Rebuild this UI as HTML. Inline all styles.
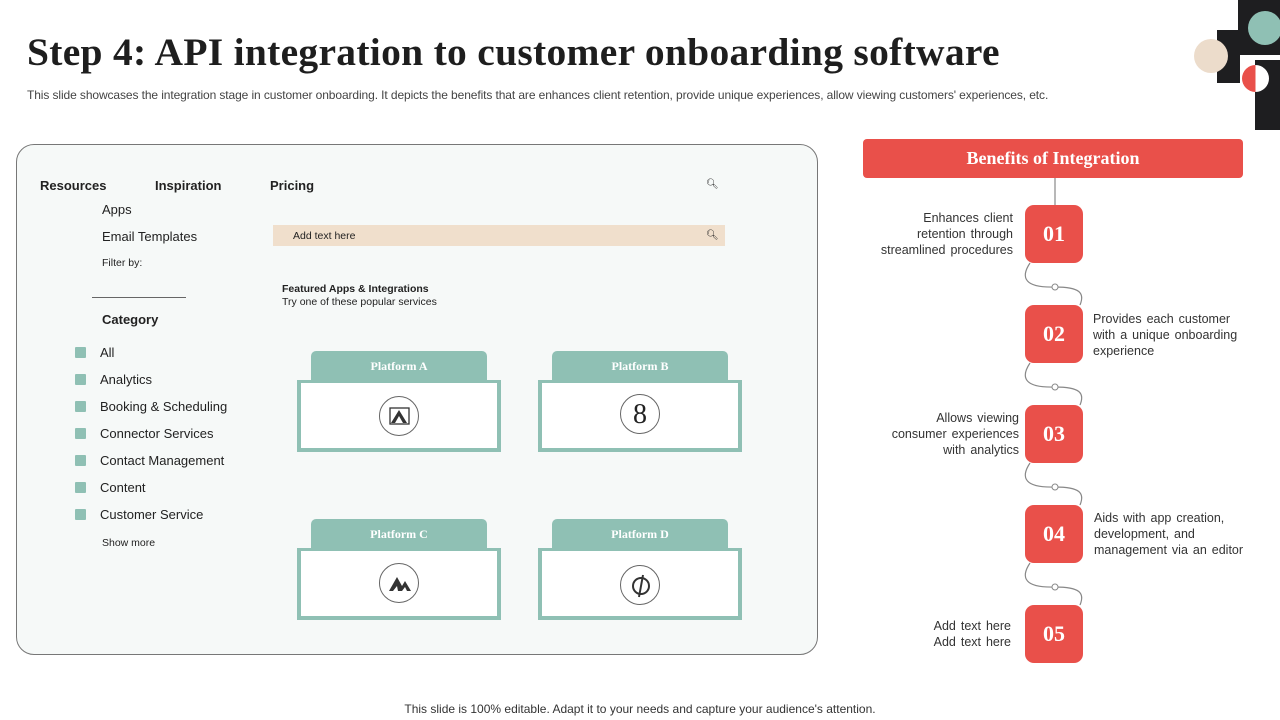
<!DOCTYPE html>
<html><head><meta charset="utf-8"><style>
*{margin:0;padding:0;box-sizing:border-box}
body{width:1280px;height:720px;position:relative;background:#fff;font-family:"Liberation Sans",sans-serif;color:#222;overflow:hidden}
.a{position:absolute}
h1{position:absolute;left:27px;top:29px;font-family:"Liberation Serif",serif;font-size:39.5px;font-weight:bold;color:#1e1e1e;white-space:nowrap;letter-spacing:0.3px}
.sub{left:27px;top:88px;font-size:12px;color:#444;letter-spacing:-0.1px}
.panel{left:16px;top:144px;width:802px;height:511px;border:1px solid #777;border-radius:18px;background:#f6f9f8}
.t13{font-size:13px;color:#222}
.chk{width:11px;height:11px;background:#8fc0b4;border-radius:1px}
.tab{width:176px;height:30px;background:#8fc0b4;border-radius:5px 5px 0 0;color:#fff;font-family:"Liberation Serif",serif;font-weight:bold;font-size:12px;text-align:center;line-height:31px}
.box{width:204px;height:72px;border:4px solid #8fc0b4;border-top:3px solid #8fc0b4;background:#fff}
.ic{width:40px;height:40px;border:1px solid #666;border-radius:50%;background:#fff}
.num{width:58px;height:58px;background:#e9504a;border-radius:9px;color:#fff;font-family:"Liberation Serif",serif;font-size:22px;font-weight:bold;text-align:center;line-height:58px}
.bt{font-size:12.5px;color:#333;line-height:16px;word-spacing:1.5px}
</style></head><body>
<h1>Step 4: API integration to customer onboarding software</h1>
<div class="a sub">This slide showcases the integration stage in customer onboarding. It depicts the benefits that are enhances client retention, provide unique experiences, allow viewing customers' experiences, etc.</div>
<div class="a" style="left:1238px;top:0;width:42px;height:55px;background:#1e1e20"></div>
<div class="a" style="left:1217px;top:30px;width:23px;height:53px;background:#1e1e20"></div>
<div class="a" style="left:1255px;top:60px;width:25px;height:70px;background:#1e1e20"></div>
<div class="a" style="left:1248px;top:11px;width:34px;height:34px;border-radius:50%;background:#8fc0b4"></div>
<div class="a" style="left:1194px;top:39px;width:34px;height:34px;border-radius:50%;background:#ecdccb"></div>
<div class="a" style="left:1242px;top:65px;width:27px;height:27px;border-radius:50%;background:linear-gradient(90deg,#e9504a 50%,#fff 50%)"></div>

<div class="a panel"></div>
<div class="a t13" style="left:40px;top:178px;font-weight:bold;font-size:13px">Resources</div>
<div class="a t13" style="left:155px;top:178px;font-weight:bold">Inspiration</div>
<div class="a t13" style="left:270px;top:178px;font-weight:bold">Pricing</div>
<div class="a" style="left:706px;top:179px;font-size:10px">🔍︎</div>
<div class="a t13" style="left:102px;top:202px">Apps</div>
<div class="a t13" style="left:102px;top:229px">Email Templates</div>
<div class="a" style="left:102px;top:257px;font-size:10.5px">Filter by:</div>
<div class="a" style="left:92px;top:297px;width:94px;height:1px;background:#666"></div>
<div class="a t13" style="left:102px;top:312px;font-weight:bold">Category</div>
<div class="a chk" style="left:75px;top:347px"></div><div class="a t13" style="left:100px;top:345px">All</div>
<div class="a chk" style="left:75px;top:374px"></div><div class="a t13" style="left:100px;top:372px">Analytics</div>
<div class="a chk" style="left:75px;top:401px"></div><div class="a t13" style="left:100px;top:399px">Booking &amp; Scheduling</div>
<div class="a chk" style="left:75px;top:428px"></div><div class="a t13" style="left:100px;top:426px">Connector Services</div>
<div class="a chk" style="left:75px;top:455px"></div><div class="a t13" style="left:100px;top:453px">Contact Management</div>
<div class="a chk" style="left:75px;top:482px"></div><div class="a t13" style="left:100px;top:480px">Content</div>
<div class="a chk" style="left:75px;top:509px"></div><div class="a t13" style="left:100px;top:507px">Customer Service</div>
<div class="a" style="left:102px;top:537px;font-size:10.5px">Show more</div>
<div class="a" style="left:273px;top:225px;width:452px;height:21px;background:#f0dfcc"></div>
<div class="a" style="left:293px;top:230px;font-size:10.5px">Add text here</div>
<div class="a" style="left:706px;top:230px;font-size:10px">🔍︎</div>
<div class="a" style="left:282px;top:283px;font-size:10.5px;font-weight:bold">Featured Apps &amp; Integrations</div>
<div class="a" style="left:282px;top:296px;font-size:10.5px">Try one of these popular services</div>

<div class="a tab" style="left:311px;top:351px">Platform A</div>
<div class="a box" style="left:297px;top:380px"></div>
<div class="a ic" style="left:379px;top:396px"><svg width="40" height="40"><rect x="10" y="11" width="19" height="16" fill="none" stroke="#333" stroke-width="1.3"/><path d="M11 26 L19 13 L27 26 L23 26 L19 19 L15 26Z" fill="#333"/></svg></div>
<div class="a tab" style="left:552px;top:351px">Platform B</div>
<div class="a box" style="left:538px;top:380px"></div>
<div class="a ic" style="left:620px;top:394px;font-family:'Liberation Serif',serif;font-size:28px;text-align:center;line-height:40px">8</div>
<div class="a tab" style="left:311px;top:519px">Platform C</div>
<div class="a box" style="left:297px;top:548px"></div>
<div class="a ic" style="left:379px;top:563px"><svg width="40" height="40"><path d="M9 27 L17 13 L22 22 L25 17 L31 27 L27 27 L25 23 L22 27 L18 27 L17 22 L13 27Z" fill="#333"/></svg></div>
<div class="a tab" style="left:552px;top:519px">Platform D</div>
<div class="a box" style="left:538px;top:548px"></div>
<div class="a ic" style="left:620px;top:565px"><svg width="40" height="40"><circle cx="20" cy="20" r="8" fill="none" stroke="#333" stroke-width="2"/><path d="M22 9 L18 31" stroke="#333" stroke-width="2"/></svg></div>

<div class="a" style="left:863px;top:139px;width:380px;height:39px;background:#e9504a;border-radius:4px;color:#fff;font-family:'Liberation Serif',serif;font-weight:bold;font-size:18px;text-align:center;line-height:38px">Benefits of Integration</div>
<svg class="a" style="left:1000px;top:178px" width="120" height="440"><g fill="none" stroke="#888" stroke-width="1.2">
<path d="M55 0 V27"/>
<path d="M30 85 C20 100 25 110 55 109 C80 109 85 115 80 127"/>
<path d="M30 185 C20 200 25 210 55 209 C80 209 85 215 80 227"/>
<path d="M30 285 C20 300 25 310 55 309 C80 309 85 315 80 327"/>
<path d="M30 385 C20 400 25 410 55 409 C80 409 85 415 80 427"/>
</g><g fill="#fff" stroke="#888"><circle cx="55" cy="109" r="3"/><circle cx="55" cy="209" r="3"/><circle cx="55" cy="309" r="3"/><circle cx="55" cy="409" r="3"/></g></svg>
<div class="a num" style="left:1025px;top:205px">01</div>
<div class="a num" style="left:1025px;top:305px">02</div>
<div class="a num" style="left:1025px;top:405px">03</div>
<div class="a num" style="left:1025px;top:505px">04</div>
<div class="a num" style="left:1025px;top:605px">05</div>
<div class="a bt" style="right:267px;top:210px;text-align:right">Enhances client<br>retention through<br>streamlined procedures</div>
<div class="a bt" style="left:1093px;top:311px">Provides each customer<br>with a unique onboarding<br>experience</div>
<div class="a bt" style="right:261px;top:410px;text-align:right">Allows viewing<br>consumer experiences<br>with analytics</div>
<div class="a bt" style="left:1094px;top:510px">Aids with app creation,<br>development, and<br>management via an editor</div>
<div class="a bt" style="right:269px;top:618px;text-align:right">Add text here<br>Add text here</div>

<div class="a" style="left:0;width:1280px;top:702px;text-align:center;font-size:12px;color:#333">This slide is 100% editable. Adapt it to your needs and capture your audience's attention.</div>
</body></html>
